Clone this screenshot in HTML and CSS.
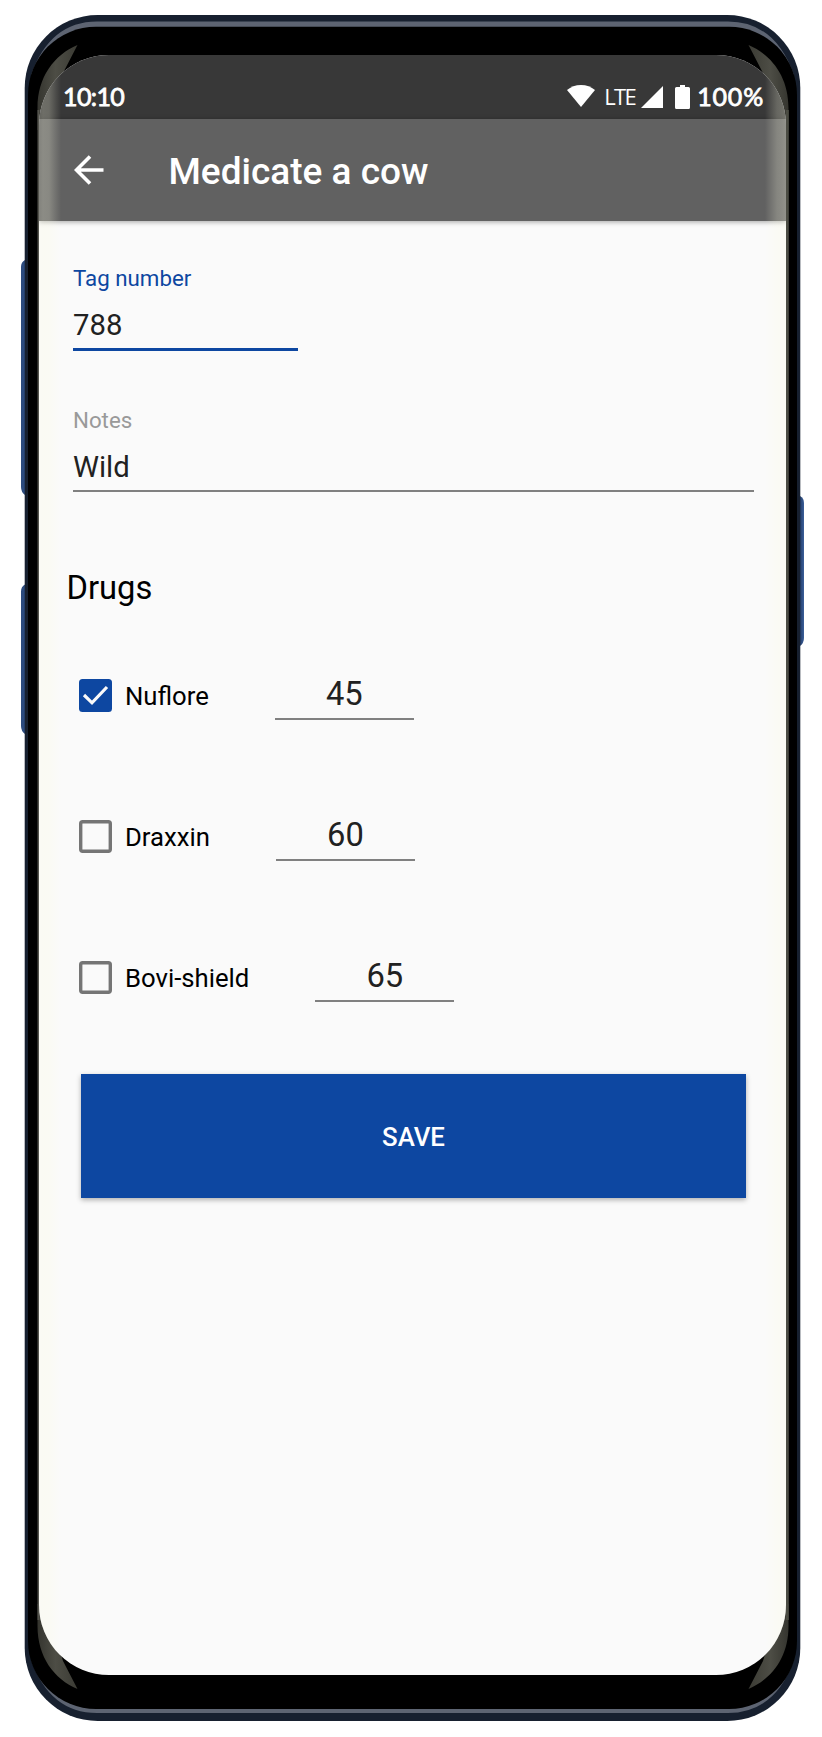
FILE: index.html
```html
<!DOCTYPE html>
<html lang="en">
<head>
<meta charset="utf-8">
<title>Medicate a cow</title>
<link rel="stylesheet" href="styles.css">
</head>
<body>
<div class="phone">
  <svg class="frame" viewBox="0 0 822 1737" aria-hidden="true">
    <defs>
      <linearGradient id="key"><stop offset="0" stop-color="#2b4a7d"/><stop offset=".5" stop-color="#2c4c80"/><stop offset="1" stop-color="#1c2c4e"/></linearGradient>
      <linearGradient id="keyRight" x1="1" x2="0"><stop offset="0" stop-color="#3b5f99"/><stop offset=".4" stop-color="#2b4879"/><stop offset="1" stop-color="#22365c"/></linearGradient>
      <linearGradient id="glint" x1="0" x2="1"><stop offset="0" stop-color="#35352f"/><stop offset=".45" stop-color="#4d4d45"/><stop offset="1" stop-color="#3b3b34"/></linearGradient>
      <path id="crescent" d="M77.5 45C54 55 37.500 77 37.500 108V130H46L63 73Z"/>
    </defs>
    <path fill="url(#key)" d="M25 260q-4 2-4 7V487q0 5 4 8h3V260ZM25 584.500q-4 2-4 7V726q0 5 4 8h3V584.500Z"/>
    <path fill="url(#keyRight)" d="M800 496q4 2 4 7V638q0 5-4 8h-3V496Z"/>
    <rect x="24.700" y="15" width="775.600" height="1706" rx="73" fill="#17202f"/>
    <path fill="#5d6472" d="M31 75Q50 21.500 97 21.500H728Q775 21.500 794 75L728 50H97ZM31 1660Q50 1713 97 1713H728Q775 1713 794 1660L728 1690H97Z"/>
    <rect x="28" y="26.700" width="769" height="1682.300" rx="68" fill="#000"/>
    <g fill="url(#glint)">
      <use href="#crescent"/>
      <use href="#crescent" transform="translate(826 0) scale(-1 1)"/>
      <use href="#crescent" transform="translate(0 1734) scale(1 -1)"/>
      <use href="#crescent" transform="translate(826 1734) scale(-1 -1)"/>
    </g>
    <path fill="none" stroke="#55554e" stroke-width="2" d="M38.500 110V1620"/>
    <path fill="none" stroke="#4b4c43" stroke-width="3" d="M787.300 110V1620"/>
  </svg>

  <main class="screen">
    <header class="status">
      <span class="clock">10:10</span>
      <div class="indicators">
        <svg class="wifi" viewBox="0 0 28 22"><path fill="#fff" d="M14 0C8.600 0 3.700 1.900 0 5l14 17L28 5C24.300 1.900 19.400 0 14 0Z"/></svg>
        <span class="network">LTE</span>
        <svg class="signal" viewBox="0 0 22 22"><path fill="#fff" d="M22 0V22H0Z"/></svg>
        <svg class="battery" viewBox="0 0 15 24"><path fill="#fff" d="M5 0h5v2h3.500Q15 2 15 3.500v19q0 1.500-1.500 1.500h-12Q0 24 0 22.500v-19Q0 2 1.500 2H5Z"/></svg>
        <span class="charge">100%</span>
      </div>
    </header>
    <nav class="appbar">
      <svg class="back" viewBox="0 0 30 30"><path d="M29.500 15H3M16 1.500 2.500 15 16 28.500" fill="none" stroke="#fff" stroke-width="3.600"/></svg>
      <h1 class="title">Medicate a cow</h1>
    </nav>

    <form class="form">
      <div class="field field-tag">
        <label class="label">Tag number</label>
        <div class="value">788</div>
      </div>
      <div class="field field-notes">
        <label class="label">Notes</label>
        <div class="value">Wild</div>
      </div>
      <h2 class="heading">Drugs</h2>
      <div class="drugs">
        <div class="drug">
          <svg class="check" viewBox="0 0 33 33"><rect width="33" height="33" rx="3.500" fill="#0d47a1"/><path d="m5 16 8 7.800L28 8" fill="none" stroke="#fafafa" stroke-width="3.200"/></svg>
          <span class="name">Nuflore</span>
          <span class="dose">45</span>
        </div>
        <div class="drug">
          <svg class="check" viewBox="0 0 33 33"><rect x="1.700" y="1.700" width="29.600" height="29.600" rx="2" fill="none" stroke="#757575" stroke-width="3.400"/></svg>
          <span class="name">Draxxin</span>
          <span class="dose">60</span>
        </div>
        <div class="drug">
          <svg class="check" viewBox="0 0 33 33"><rect x="1.700" y="1.700" width="29.600" height="29.600" rx="2" fill="none" stroke="#757575" stroke-width="3.400"/></svg>
          <span class="name">Bovi-shield</span>
          <span class="dose">65</span>
        </div>
      </div>
      <button class="save" type="button">SAVE</button>
    </form>
    <div class="glass"></div>
  </main>
</div>
</body>
</html>
```
FILE: styles.css
```css
* { box-sizing: border-box; }
body {
  margin: 0;
  background: #fff;
  font-family: Roboto, sans-serif;
}
.phone {
  position: relative;
  width: 822px;
  height: 1737px;
  padding: 55px 0 0 39px;
}
.frame {
  position: absolute;
  inset: 0;
  width: 822px;
  height: 1737px;
}
.screen {
  position: relative;
  width: 747px;
  height: 1620px;
  overflow: hidden;
  border-radius: 70px;
  background: #fafafa;
}
.glass {
  position: absolute;
  inset: 0;
  pointer-events: none;
  background:
    linear-gradient(to right, rgba(250, 250, 226, .22), rgba(250, 250, 226, .28) 4px, rgba(250, 250, 226, .26) 10px, rgba(250, 250, 226, .1) 17px, transparent 22px),
    linear-gradient(to left, rgba(250, 250, 226, .32), rgba(250, 250, 226, .28) 4px, rgba(250, 250, 226, .24) 9px, rgba(250, 250, 226, .1) 16px, transparent 21px);
}
.status {
  display: flex;
  align-items: center;
  justify-content: space-between;
  height: 64px;
  padding: 18px 22px 0 24px;
  background: #383838;
  color: #fff;
}
.clock, .charge {
  font: 400 25px/30px Lato, sans-serif;
  -webkit-text-stroke: .8px #fff;
}
.clock { letter-spacing: -.6px; }
.charge { margin-left: 7px; letter-spacing: .8px; }
.indicators {
  display: flex;
  align-items: center;
}
.wifi { width: 28px; height: 22px; margin-right: 9px; }
.network {
  margin-right: 6px;
  font: 400 22px/30px "Open Sans", sans-serif;
  letter-spacing: -1.600px;
}
.signal { width: 22px; height: 22px; margin-top: 2px; }
.battery { width: 15px; height: 24px; margin-left: 12px; margin-top: 1px; }
.appbar {
  position: relative;
  display: flex;
  align-items: center;
  height: 102px;
  padding-left: 34.500px;
  background: #616161;
  color: #fff;
  box-shadow: 0 1px 5px rgba(0, 0, 0, .35);
}
.back { width: 30px; height: 30px; }
.title {
  margin: 4px 0 0 65px;
  font-size: 37px;
  font-weight: 500;
  line-height: 44px;
}
.form { padding: 45.500px 32px 0 34px; }
.field { color: #212121; }
.label {
  display: block;
  font-size: 22.300px;
  line-height: 22px;
  color: #999;
}
.value {
  margin-top: 18px;
  font-size: 29.300px;
  line-height: 36px;
}
.field-tag {
  width: 225px;
  height: 84.500px;
  border-bottom: 3px solid #0d47a1;
}
.field-tag .label { color: #0d47a1; }
.field-notes {
  height: 83px;
  margin-top: 58px;
  border-bottom: 2px solid #808080;
}
.heading {
  margin: 76px 0 0 -6.500px;
  font-size: 32.700px;
  font-weight: 400;
  line-height: 40px;
  color: #000;
}
.drugs { padding: 58px 0 0 6px; }
.drug {
  display: flex;
  align-items: center;
  height: 56px;
  margin-bottom: 85px;
}
.check { width: 33px; height: 33px; margin-top: 2px; }
.name {
  margin: 3px 66px 0 13px;
  font-size: 25.700px;
  line-height: 30px;
  color: #000;
}
.dose {
  width: 139px;
  height: 53px;
  margin-top: -2px;
  border-bottom: 2px solid #808080;
  text-align: center;
  font-size: 32.700px;
  line-height: 54px;
  color: #212121;
}
.save {
  display: block;
  width: 665px;
  height: 124px;
  margin: -15px 0 0 8px;
  padding: 2px 0 0;
  border: 0;
  background: #0d47a1;
  box-shadow: 0 2px 5px rgba(0, 0, 0, .3);
  color: #fff;
  font: 500 25.800px/30px Roboto, sans-serif;
}
```
